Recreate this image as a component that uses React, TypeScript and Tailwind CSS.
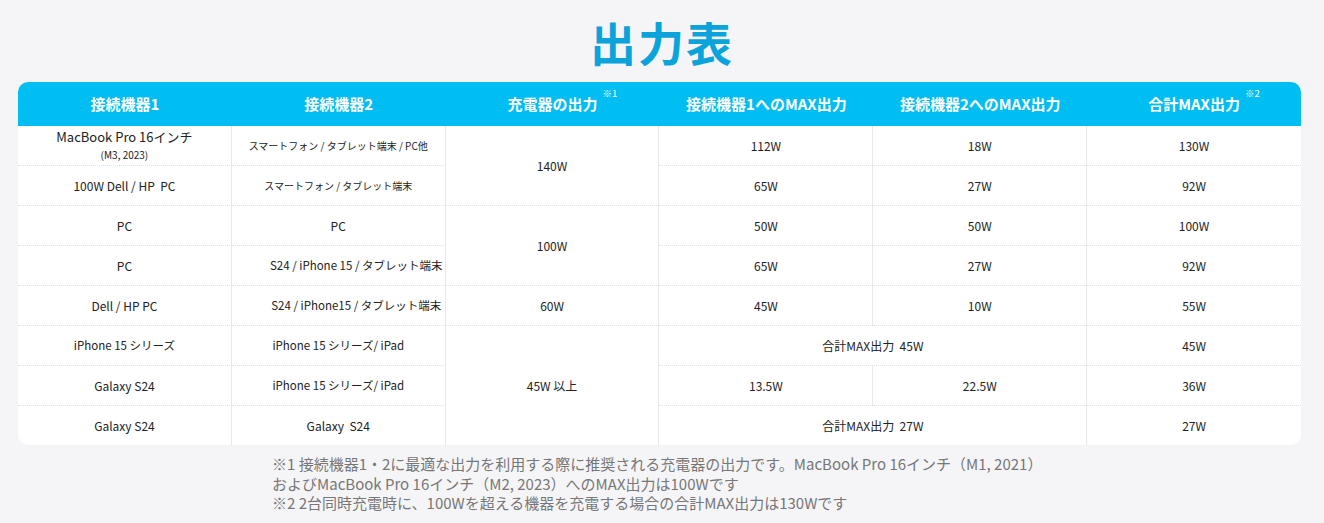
import React from "react"

type Cell = {
  text: React.ReactNode
  rowSpan?: 2 | 3
  colSpan?: 2
  lastRow?: boolean
  lastCol?: boolean
  size?: "sm" | "xs"
  shift?: boolean
}

const rows: Cell[][] = [
  [
    {
      text: (
        <span className="flex flex-col items-center leading-[18px]">
          <span className="text-[13px]">MacBook Pro 16インチ</span>
          <span className="text-[10px]">(M3, 2023)</span>
        </span>
      ),
    },
    { text: "スマートフォン / タブレット端末 / PC他", size: "xs" },
    { text: "140W", rowSpan: 2 },
    { text: "112W" },
    { text: "18W" },
    { text: "130W", lastCol: true },
  ],
  [
    { text: "100W Dell / HP  PC" },
    { text: "スマートフォン / タブレット端末", size: "xs" },
    { text: "65W" },
    { text: "27W" },
    { text: "92W", lastCol: true },
  ],
  [
    { text: "PC" },
    { text: "PC" },
    { text: "100W", rowSpan: 2 },
    { text: "50W" },
    { text: "50W" },
    { text: "100W", lastCol: true },
  ],
  [
    { text: "PC" },
    { text: "S24 / iPhone 15 / タブレット端末", size: "sm", shift: true },
    { text: "65W" },
    { text: "27W" },
    { text: "92W", lastCol: true },
  ],
  [
    { text: "Dell / HP PC" },
    { text: "S24 / iPhone15 / タブレット端末", size: "sm", shift: true },
    { text: "60W" },
    { text: "45W" },
    { text: "10W" },
    { text: "55W", lastCol: true },
  ],
  [
    { text: "iPhone 15 シリーズ", size: "sm" },
    { text: "iPhone 15 シリーズ/ iPad", size: "sm" },
    { text: "45W 以上", rowSpan: 3, lastRow: true },
    { text: "合計MAX出力  45W", colSpan: 2 },
    { text: "45W", lastCol: true },
  ],
  [
    { text: "Galaxy S24" },
    { text: "iPhone 15 シリーズ/ iPad", size: "sm" },
    { text: "13.5W" },
    { text: "22.5W" },
    { text: "36W", lastCol: true },
  ],
  [
    { text: "Galaxy S24", lastRow: true },
    { text: "Galaxy  S24", lastRow: true },
    { text: "合計MAX出力  27W", colSpan: 2, lastRow: true },
    { text: "27W", lastCol: true, lastRow: true },
  ],
]

const headers = [
  { label: "接続機器1" },
  { label: "接続機器2" },
  { label: "充電器の出力", note: "※1" },
  { label: "接続機器1へのMAX出力" },
  { label: "接続機器2へのMAX出力" },
  { label: "合計MAX出力", note: "※2" },
]

function BodyCell({ cell }: { cell: Cell }) {
  return (
    <div
      className={[
        "flex items-center justify-center text-center text-[#222] whitespace-pre",
        cell.size === "xs" ? "text-[10px]" : cell.size === "sm" ? "text-[11.5px]" : "text-[12px]",
        cell.shift ? "pl-[36px]" : "",
        cell.rowSpan === 2 ? "row-span-2" : "",
        cell.rowSpan === 3 ? "row-span-3" : "",
        cell.colSpan === 2 ? "col-span-2" : "",
        cell.lastCol ? "" : "border-r border-[#e8e8e8]",
        cell.lastRow ? "" : "border-b border-b-[#dedede] [border-bottom-style:dotted]",
      ].join(" ")}
    >
      {cell.text}
    </div>
  )
}

export default function App() {
  return (
    <div
      className="w-[1324px] h-[523px] bg-[#f5f5f7] pt-[14px]"
      style={{ fontFamily: '"Noto Sans CJK JP", "Noto Sans", sans-serif' }}
    >
      {/* Title */}
      <h1 className="text-center text-[46px] leading-[54px] font-bold text-[#0aa4da] tracking-[2px]">
        出力表
      </h1>

      {/* Table */}
      <div className="ml-[18px] mt-[14px] w-[1283px] bg-white rounded-[10px] overflow-hidden">
        <div className="grid grid-cols-6 h-[44px] bg-[#00bef2]">
          {headers.map((h) => (
            <div
              key={h.label}
              className="flex items-center justify-center text-[15px] font-bold text-white"
            >
              <span className="relative">
                {h.label}
                {h.note && (
                  <span className="absolute left-full top-[-7px] ml-[5px] text-[9.5px] font-normal whitespace-nowrap">
                    {h.note}
                  </span>
                )}
              </span>
            </div>
          ))}
        </div>
        <div className="grid grid-cols-6 grid-rows-[repeat(7,40px)_39px]">
          {rows.flat().map((cell, i) => (
            <BodyCell key={i} cell={cell} />
          ))}
        </div>
      </div>

      {/* Notes */}
      <div className="mt-[9px] ml-[272px] text-[15px] leading-[19.5px] text-[#777]">
        <p>※1 接続機器1・2に最適な出力を利用する際に推奨される充電器の出力です。MacBook Pro 16インチ（M1, 2021）</p>
        <p>およびMacBook Pro 16インチ（M2, 2023）へのMAX出力は100Wです</p>
        <p>※2 2台同時充電時に、100Wを超える機器を充電する場合の合計MAX出力は130Wです</p>
      </div>
    </div>
  )
}
